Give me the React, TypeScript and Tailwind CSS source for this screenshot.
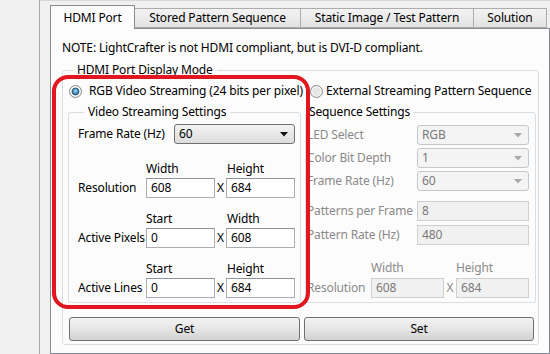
import React from "react";

const font = { fontFamily: '"Noto Sans", "DejaVu Sans", sans-serif' };

function Radio({ checked }: { checked?: boolean }) {
  return (
    <svg width="13" height="13" viewBox="0 0 13 13" className="shrink-0">
      <defs>
        <radialGradient id={checked ? "rOn" : "rOff"} cx="0.5" cy="0.4" r="0.6">
          <stop offset="0" stopColor={checked ? "#9fe0ff" : "#ffffff"} />
          <stop offset="1" stopColor={checked ? "#1a5f8a" : "#dcdcdc"} />
        </radialGradient>
      </defs>
      <circle cx="6.5" cy="6.5" r="6" fill="#f4f4f4" stroke="#8a8a8a" />
      <circle cx="6.5" cy="6.5" r="4.2" fill="#e6e6e6" />
      {checked && <circle cx="6.5" cy="6.5" r="3.4" fill={`url(#rOn)`} stroke="#1c4f75" strokeWidth="0.8" />}
    </svg>
  );
}

function Combo({ value, w, disabled }: { value: string; w: string; disabled?: boolean }) {
  return (
    <div
      className={`flex h-[20px] ${w} items-center justify-between rounded-[3px] border pl-[4px] pr-[6px] ${
        disabled
          ? "border-[#c5c8cb] bg-[#f4f4f4] text-[#7a7a7a]"
          : "border-[#707070] bg-gradient-to-b from-[#f3f3f3] to-[#dcdcdc] text-black"
      }`}
    >
      <span>{value}</span>
      <svg width="8" height="5" viewBox="0 0 8 5">
        <path d="M0 0h8L4 4.5z" fill={disabled ? "#a8a8a8" : "#111"} />
      </svg>
    </div>
  );
}

function Field({ value, w, disabled }: { value: string; w: string; disabled?: boolean }) {
  return (
    <div
      className={`flex h-[20px] ${w} items-center border pl-[4px] ${
        disabled
          ? "border-[#cfcfcf] bg-[#f1f1f1] text-[#7a7a7a]"
          : "border-[#abadb3] border-t-[#8f939c] bg-white text-black"
      }`}
    >
      {value}
    </div>
  );
}

function Header({ a, b, aw, disabled }: { a: string; b: string; aw: string; disabled?: boolean }) {
  return (
    <div className={`flex h-[16px] items-center leading-[16px] ${disabled ? "text-[#8a8a8a]" : ""}`}>
      <span className={aw} />
      <span className="w-[81px]">{a}</span>
      <span>{b}</span>
    </div>
  );
}

export default function App() {
  const tabs = [
    { label: "Stored Pattern Sequence", w: "w-[166px]" },
    { label: "Static Image / Test Pattern", w: "w-[173px]" },
    { label: "Solution", w: "w-[73px]" },
  ];

  return (
    <div
      className="relative flex h-[354px] w-[550px] overflow-hidden bg-[#f0f0f0] text-[12px] leading-[16px] tracking-[-0.15px] text-black"
      style={font}
    >
      <div className="w-[40px] shrink-0 border-r border-[#a9a9a9]" />
      <div className="flex flex-col border-t border-[#d9d9d9] pl-[10px] pt-[4px]">
        {/* tab headers */}
        <div className="flex items-end">
          <div className="relative z-10 -mb-px flex h-[24px] w-[85px] items-center justify-center border border-b-0 border-[#898c95] bg-[#fcfcfc]">
            HDMI Port
          </div>
          {tabs.map((t) => (
            <div
              key={t.label}
              className={`flex h-[20px] ${t.w} items-center justify-center border border-l-0 border-[#acacac] bg-gradient-to-b from-[#f3f3f3] to-[#e2e2e2]`}
            >
              {t.label}
            </div>
          ))}
        </div>

        {/* tab page */}
        <div className="h-[340px] w-[500px] border border-[#898c95] bg-[#fcfcfc] pl-[11px] pt-[11px]">
          <p>NOTE: LightCrafter is not HDMI compliant, but is DVI-D compliant.</p>

          <fieldset className="mt-[6px] h-[283px] w-[477px] rounded-[3px] border border-[#d5dfe5] pl-[5px]">
            <legend className="ml-[5px] px-[4px] leading-[16px]">HDMI Port Display Mode</legend>

            <div className="mt-[5px] flex h-[16px] items-center">
              <div className="ml-[1px] flex w-[241px] items-center gap-[7px]">
                <Radio checked />
                <span className="whitespace-nowrap">RGB Video Streaming (24 bits per pixel)</span>
              </div>
              <div className="flex items-center gap-[3px]">
                <Radio />
                <span className="whitespace-nowrap">External Streaming Pattern Sequence</span>
              </div>
            </div>

            <div className="mt-[5px] flex gap-[4px]">
              {/* left group */}
              <fieldset className="h-[199px] w-[233px] rounded-[3px] border border-[#d5dfe5] pl-[9px]">
                <legend className="ml-[6px] px-[4px] leading-[16px]">Video Streaming Settings</legend>
                <div className="mt-[4px] flex items-center">
                  <span className="w-[96px]">Frame Rate (Hz)</span>
                  <Combo value="60" w="w-[121px]" />
                </div>
                <div className="mt-[17px]">
                  <Header a="Width" b="Height" aw="w-[68px]" />
                </div>
                <div className="mt-[1px] flex items-center">
                  <span className="w-[68px]">Resolution</span>
                  <Field value="608" w="w-[69px]" />
                  <span className="w-[11px] text-center">X</span>
                  <Field value="684" w="w-[69px]" />
                </div>
                <div className="mt-[13px]">
                  <Header a="Start" b="Width" aw="w-[68px]" />
                </div>
                <div className="mt-[1px] flex items-center">
                  <span className="w-[68px] whitespace-nowrap">Active Pixels</span>
                  <Field value="0" w="w-[69px]" />
                  <span className="w-[11px] text-center">X</span>
                  <Field value="608" w="w-[69px]" />
                </div>
                <div className="mt-[13px]">
                  <Header a="Start" b="Height" aw="w-[68px]" />
                </div>
                <div className="mt-[1px] flex items-center">
                  <span className="w-[68px] whitespace-nowrap">Active Lines</span>
                  <Field value="0" w="w-[69px]" />
                  <span className="w-[11px] text-center">X</span>
                  <Field value="684" w="w-[69px]" />
                </div>
              </fieldset>

              {/* right group */}
              <fieldset className="h-[199px] w-[231px] rounded-[3px] border border-[#d5dfe5] pl-[1px]">
                <legend className="ml-[-1px] px-[3px] leading-[16px]">Sequence Settings</legend>
                <div className="mt-[5px] flex items-center text-[#8a8a8a]">
                  <span className="w-[110px]">LED Select</span>
                  <Combo value="RGB" w="w-[112px]" disabled />
                </div>
                <div className="mt-[3px] flex items-center text-[#8a8a8a]">
                  <span className="w-[110px]">Color Bit Depth</span>
                  <Combo value="1" w="w-[112px]" disabled />
                </div>
                <div className="mt-[3px] flex items-center text-[#8a8a8a]">
                  <span className="w-[110px]">Frame Rate (Hz)</span>
                  <Combo value="60" w="w-[112px]" disabled />
                </div>
                <div className="mt-[10px] flex items-center text-[#8a8a8a]">
                  <span className="w-[110px] whitespace-nowrap">Patterns per Frame</span>
                  <Field value="8" w="w-[112px]" disabled />
                </div>
                <div className="mt-[4px] flex items-center text-[#8a8a8a]">
                  <span className="w-[110px]">Pattern Rate (Hz)</span>
                  <Field value="480" w="w-[112px]" disabled />
                </div>
                <div className="mt-[15px] flex h-[16px] items-center text-[#8a8a8a]">
                  <span className="w-[64px]" />
                  <span className="w-[85px]">Width</span>
                  <span>Height</span>
                </div>
                <div className="mt-[2px] flex items-center text-[#8a8a8a]">
                  <span className="w-[64px]">Resolution</span>
                  <Field value="608" w="w-[73px]" disabled />
                  <span className="w-[12px] text-center">X</span>
                  <Field value="684" w="w-[73px]" disabled />
                </div>
              </fieldset>
            </div>

            <div className="ml-[1px] mt-[14px] flex gap-[4px]">
              <button className="h-[24px] w-[231px] rounded-[3px] border border-[#707070] bg-gradient-to-b from-[#f2f2f2] via-[#e6e6e6] to-[#d2d2d2]">
                Get
              </button>
              <button className="h-[24px] w-[230px] rounded-[3px] border border-[#707070] bg-gradient-to-b from-[#f2f2f2] via-[#e6e6e6] to-[#d2d2d2]">
                Set
              </button>
            </div>
          </fieldset>
        </div>
      </div>

      {/* red annotation */}
      <div className="pointer-events-none absolute left-[52px] top-[75px] h-[234px] w-[258px] rounded-[16px] border-4 border-[#e1161f]" />
    </div>
  );
}
